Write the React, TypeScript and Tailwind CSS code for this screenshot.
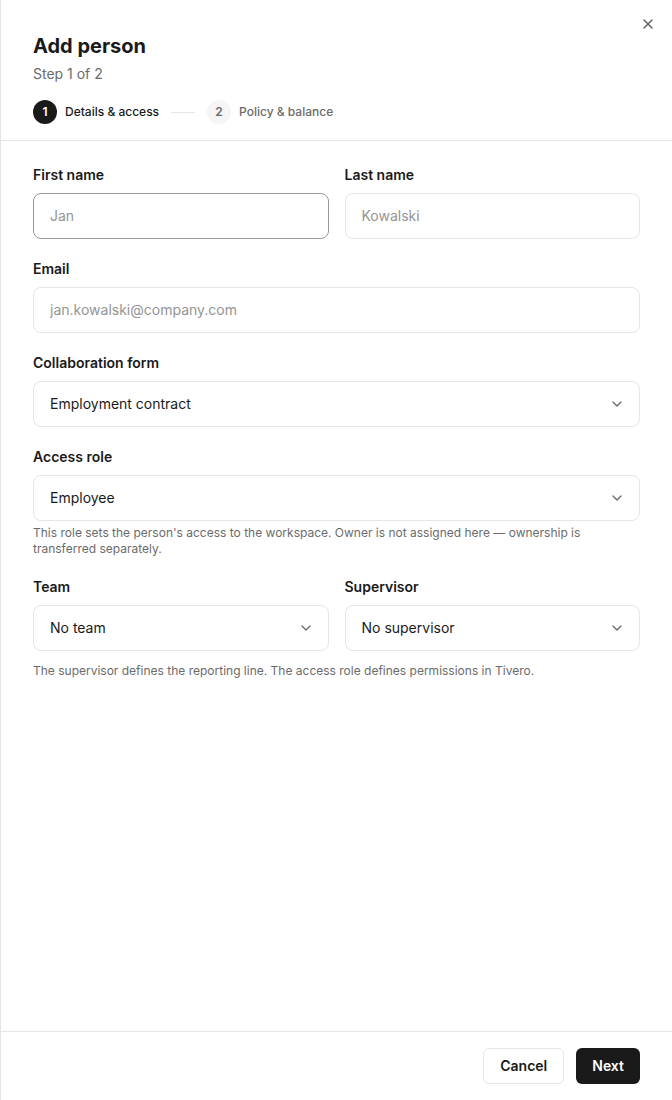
import { ReactNode } from "react";
import { ChevronDown, X } from "lucide-react";

const control =
  "block w-full rounded-lg border bg-white px-4 py-3 text-sm leading-5 text-[#1a1a1a] outline-none placeholder:text-[#949494]";

function Field({ id, label, hint, children }: { id: string; label: string; hint?: string; children: ReactNode }) {
  return (
    <div className="min-w-0">
      <label htmlFor={id} className="mb-2 block text-sm font-semibold leading-5">
        {label}
      </label>
      {children}
      {hint && <p className="mt-1 text-xs leading-4 text-[#6b6b6b]">{hint}</p>}
    </div>
  );
}

function TextField({ id, label, placeholder, type = "text", active = false }: { id: string; label: string; placeholder: string; type?: string; active?: boolean }) {
  return (
    <Field id={id} label={label}>
      <input
        id={id}
        type={type}
        placeholder={placeholder}
        className={`${control} ${active ? "border-[#999999]" : "border-[#e5e5e5]"}`}
      />
    </Field>
  );
}

function SelectField({ id, label, options, hint }: { id: string; label: string; options: string[]; hint?: string }) {
  return (
    <Field id={id} label={label} hint={hint}>
      <div className="relative">
        <select id={id} className={`${control} appearance-none border-[#e5e5e5]`}>
          {options.map((option) => (
            <option key={option}>{option}</option>
          ))}
        </select>
        <ChevronDown aria-hidden="true" className="pointer-events-none absolute inset-y-0 right-[15px] my-auto size-4 text-[#6b6b6b]" />
      </div>
    </Field>
  );
}

export default function App() {
  return (
    <div
      role="dialog"
      aria-labelledby="title"
      className="relative flex min-h-screen flex-col border-l border-[#e5e5e5] bg-white font-['Inter',sans-serif] text-[#1a1a1a]"
    >
      <button type="button" aria-label="Close" className="absolute right-4 top-4 text-[#5c5c5c]">
        <X className="size-4" />
      </button>

      <header className="border-b border-[#e5e5e5] px-8 pb-4 pt-8">
        <h1 id="title" className="text-xl font-bold leading-7">
          Add person
        </h1>
        <p className="mt-1 text-sm leading-5 text-[#6b6b6b]">Step 1 of 2</p>
        <ol className="mt-4 flex items-center gap-3 text-xs font-medium">
          <li aria-current="step" className="flex items-center gap-2">
            <span className="flex size-6 items-center justify-center rounded-full bg-[#1a1a1a] font-semibold text-white">1</span>
            Details &amp; access
          </li>
          <li aria-hidden="true" className="h-px w-6 bg-[#e5e5e5]" />
          <li className="flex items-center gap-2 text-[#6b6b6b]">
            <span className="flex size-6 items-center justify-center rounded-full bg-[#f5f5f5] font-semibold">2</span>
            Policy &amp; balance
          </li>
        </ol>
      </header>

      <form id="person" className="flex flex-1 flex-col gap-5 px-8 py-6">
        <div className="grid grid-cols-2 gap-4">
          <TextField id="first" label="First name" placeholder="Jan" active />
          <TextField id="last" label="Last name" placeholder="Kowalski" />
        </div>
        <TextField id="email" label="Email" type="email" placeholder="jan.kowalski@company.com" />
        <SelectField id="form" label="Collaboration form" options={["Employment contract"]} />
        <SelectField
          id="role"
          label="Access role"
          options={["Employee"]}
          hint="This role sets the person's access to the workspace. Owner is not assigned here — ownership is transferred separately."
        />
        <div>
          <div className="grid grid-cols-2 gap-4">
            <SelectField id="team" label="Team" options={["No team"]} />
            <SelectField id="supervisor" label="Supervisor" options={["No supervisor"]} />
          </div>
          <p className="mt-3 text-xs leading-4 text-[#6b6b6b]">
            The supervisor defines the reporting line. The access role defines permissions in Tivero.
          </p>
        </div>
      </form>

      <footer className="flex justify-end gap-3 border-t border-[#e5e5e5] px-8 py-4 text-sm font-semibold">
        <button type="button" className="h-9 rounded-md border border-[#e5e5e5] bg-white px-4">
          Cancel
        </button>
        <button type="submit" form="person" className="h-9 rounded-md bg-[#1a1a1a] px-4 text-white">
          Next
        </button>
      </footer>
    </div>
  );
}
